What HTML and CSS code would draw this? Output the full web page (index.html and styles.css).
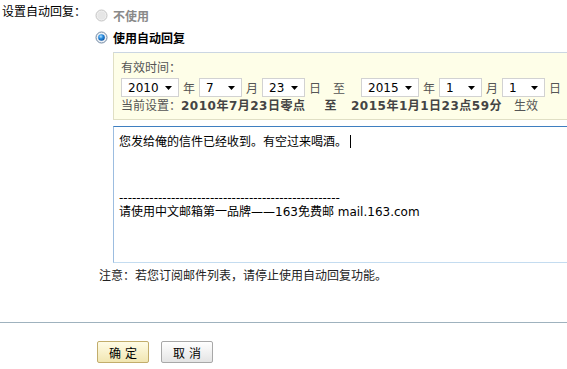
FILE: index.html
```html
<!DOCTYPE html>
<html lang="zh-CN">
<head>
<meta charset="utf-8">
<title>自动回复</title>
<link rel="stylesheet" href="styles.css">
</head>
<body>
<div class="setting">
  <div class="setting-label">设置自动回复：</div>
  <div class="setting-body">
    <label class="opt opt-disabled">
      <svg class="radio" width="13" height="13" viewBox="0 0 13 13"><circle cx="6.5" cy="6.5" r="5.5" fill="#f0f0f0" stroke="#c4c4c4"/><circle cx="6.5" cy="6.5" r="4" fill="#e6e6e6"/></svg>
      <span>不使用</span>
    </label>
    <label class="opt">
      <svg class="radio" width="13" height="13" viewBox="0 0 13 13"><defs><radialGradient id="dot" cx="0.4" cy="0.35" r="0.7"><stop offset="0" stop-color="#b8e4ff"/><stop offset="0.45" stop-color="#2a8ee0"/><stop offset="1" stop-color="#0b4f9e"/></radialGradient></defs><circle cx="6.5" cy="6.5" r="5.5" fill="#eef2f6" stroke="#6f87a2"/><circle cx="6.5" cy="6.5" r="3.3" fill="url(#dot)"/></svg>
      <span>使用自动回复</span>
    </label>

    <div class="panel">
      <div class="panel-title">有效时间：</div>
      <div class="date-row">
        <span class="sel sel-wide"><span>2010</span><svg width="7" height="4" viewBox="0 0 7 4"><path d="M0 0H7L3.5 4Z" fill="#000"/></svg></span>
        <span class="unit">年</span>
        <span class="sel"><span>7</span><svg width="7" height="4" viewBox="0 0 7 4"><path d="M0 0H7L3.5 4Z" fill="#000"/></svg></span>
        <span class="unit">月</span>
        <span class="sel"><span>23</span><svg width="7" height="4" viewBox="0 0 7 4"><path d="M0 0H7L3.5 4Z" fill="#000"/></svg></span>
        <span class="unit">日</span>
        <span class="to">至</span>
        <span class="sel sel-wide"><span>2015</span><svg width="7" height="4" viewBox="0 0 7 4"><path d="M0 0H7L3.5 4Z" fill="#000"/></svg></span>
        <span class="unit">年</span>
        <span class="sel"><span>1</span><svg width="7" height="4" viewBox="0 0 7 4"><path d="M0 0H7L3.5 4Z" fill="#000"/></svg></span>
        <span class="unit">月</span>
        <span class="sel"><span>1</span><svg width="7" height="4" viewBox="0 0 7 4"><path d="M0 0H7L3.5 4Z" fill="#000"/></svg></span>
        <span class="unit">日</span>
      </div>
      <div class="current">
        <span>当前设置：</span><b class="val">2010年7月23日零点</b><b class="val cur-to">至</b><b class="val">2015年1月1日23点59分</b><span class="effect">生效</span>
      </div>
    </div>

    <div class="editor" role="textbox">
      <div>您发给俺的信件已经收到。有空过来喝酒。<span class="caret"></span></div>
      <div class="blank"></div>
      <div class="blank"></div>
      <div class="blank"></div>
      <div>---------------------------------------------------</div>
      <div>请使用中文邮箱第一品牌——163免费邮 mail.163.com</div>
    </div>

    <p class="note">注意：若您订阅邮件列表，请停止使用自动回复功能。</p>
  </div>
</div>
<hr class="divider">
<div class="actions">
  <button class="btn btn-primary">确 定</button>
  <button class="btn">取 消</button>
</div>
</body>
</html>
```

FILE: styles.css
```css
html, body {
  margin: 0;
  padding: 0;
  overflow: hidden;
  background: #fff;
}

body {
  width: 567px;
  height: 369px;
  font-family: "DejaVu Sans", "Noto Sans CJK SC", sans-serif;
  font-size: 12px;
  color: #000;
}

.setting {
  display: flex;
  padding-top: 4px;
}

.setting-label {
  flex: none;
  width: 95px;
  box-sizing: border-box;
  padding-left: 2px;
  line-height: 16px;
}

.setting-body {
  flex: none;
  width: 490px;
}

.opt {
  display: flex;
  align-items: center;
  height: 22px;
  font-weight: bold;
}

.opt-disabled {
  color: #8a8a8a;
}

.radio {
  flex: none;
  margin-right: 5px;
}

.panel {
  margin: 4px 0 6px 18px;
  padding: 7px 0 4px 7px;
  background: #fefee8;
  border: 1px solid #e0dfc4;
  border-top-color: #cbd6e2;
  border-right: 0;
  color: #555;
}

.panel-title {
  line-height: 16px;
}

.date-row {
  display: flex;
  align-items: center;
  height: 19px;
  margin-top: 2px;
}

.sel {
  display: flex;
  align-items: center;
  justify-content: space-between;
  box-sizing: border-box;
  width: 43px;
  height: 19px;
  padding: 0 6px 0 6px;
  background: #fff;
  border: 1px solid #d2d2d2;
  color: #000;
}

.sel-wide {
  width: 58px;
}

.unit {
  margin: 0 4px 0 4px;
}

.to {
  margin: 0 16px 0 8px;
}

.current {
  line-height: 18px;
}

.val {
  color: #444;
  letter-spacing: 0.5px;
}

.cur-to {
  margin: 0 14px 0 19px;
}

.effect {
  margin-left: 12px;
}

.editor {
  margin-left: 18px;
  height: 137px;
  box-sizing: border-box;
  padding: 8px 5px 6px;
  border: 1px solid;
  border-color: #3f7fc0 #9cbde0 #c4dcf0 #9cbde0;
  border-right: 0;
  line-height: 14px;
  background: #fff;
}

.blank {
  height: 14px;
}

.caret {
  display: inline-block;
  width: 1px;
  height: 13px;
  margin-left: 3px;
  vertical-align: -2px;
  background: #000;
}

.note {
  margin: 5px 0 0 4px;
  line-height: 16px;
  color: #222;
}

.divider {
  margin: 38px 0 0;
  border: 0;
  border-top: 1px solid #9fb2be;
  height: 0;
}

.actions {
  display: flex;
  gap: 12px;
  padding: 18px 0 0 97px;
}

.btn {
  width: 52px;
  height: 22px;
  padding: 0;
  box-sizing: border-box;
  font-family: "DejaVu Sans", "Noto Sans CJK SC", sans-serif;
  font-size: 12px;
  color: #000;
  border: 1px solid #a8a8a8;
  border-radius: 2px;
  background: linear-gradient(#ffffff, #e4e4e4);
}

.btn-primary {
  border-color: #c2ad6c;
  background: linear-gradient(#fffce6, #f1e6b2);
}
```
